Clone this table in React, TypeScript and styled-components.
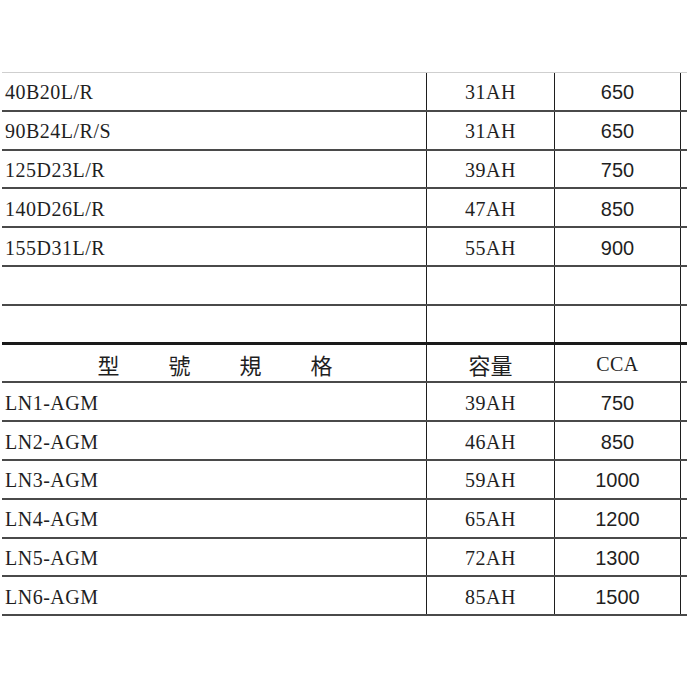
import React from 'react';
import styled, { createGlobalStyle } from 'styled-components';

const GlobalStyle = createGlobalStyle`
  html, body {
    margin: 0;
    padding: 0;
    background: #ffffff;
    overflow: hidden;
  }
`;

const Sheet = styled.div`
  width: 687px;
  height: 687px;
  padding: 72px 0 0 2px;
  box-sizing: border-box;
  overflow: hidden;
`;

const Table = styled.div`
  width: 720px;
  border-top: 1px solid #cfcfcf;
`;

const Row = styled.div<{ $thick?: boolean }>`
  display: grid;
  grid-template-columns: 425px 128px 126px 1fr;
  height: 38.8px;
  box-sizing: border-box;
  border-bottom: ${(p) => (p.$thick ? '3px solid #1a1a1a' : '2px solid #4a4a4a')};
`;

const Cell = styled.div<{ $align?: 'left' | 'center'; $sans?: boolean }>`
  display: flex;
  align-items: center;
  justify-content: ${(p) => (p.$align === 'left' ? 'flex-start' : 'center')};
  padding-left: ${(p) => (p.$align === 'left' ? '3px' : '0')};
  padding-top: 3px;
  box-sizing: border-box;
  border-right: 1.5px solid #1e1e1e;
  color: #1f1f1f;
  font-family: ${(p) => (p.$sans ? '"Liberation Sans", Arial, sans-serif' : '"Liberation Serif", "Noto Sans CJK TC", serif')};
  font-size: 20px;
  letter-spacing: ${(p) => (p.$sans ? '0' : '0.5px')};
  white-space: nowrap;
  &:last-child {
    border-right: none;
  }
`;

const HeadCell = styled(Cell)`
  font-family: "Noto Sans CJK TC", "Noto Sans CJK SC", sans-serif;
  font-size: 22px;
  letter-spacing: 0;
`;

const SpacedTitle = styled.div`
  display: flex;
  gap: 49px;
  padding-left: 2px;
`;

const top = [
  ['40B20L/R', '31AH', '650'],
  ['90B24L/R/S', '31AH', '650'],
  ['125D23L/R', '39AH', '750'],
  ['140D26L/R', '47AH', '850'],
  ['155D31L/R', '55AH', '900'],
];

const agm = [
  ['LN1-AGM', '39AH', '750'],
  ['LN2-AGM', '46AH', '850'],
  ['LN3-AGM', '59AH', '1000'],
  ['LN4-AGM', '65AH', '1200'],
  ['LN5-AGM', '72AH', '1300'],
  ['LN6-AGM', '85AH', '1500'],
];

const DataRow = ({ item }: { item: string[] }) => (
  <Row>
    <Cell $align="left">{item[0]}</Cell>
    <Cell>{item[1]}</Cell>
    <Cell $sans>{item[2]}</Cell>
    <Cell />
  </Row>
);

const EmptyRow = ({ thick }: { thick?: boolean }) => (
  <Row $thick={thick}>
    <Cell />
    <Cell />
    <Cell />
    <Cell />
  </Row>
);

export default function App() {
  return (
    <>
      <GlobalStyle />
      <Sheet>
        <Table>
          {top.map((item) => (
            <DataRow key={item[0]} item={item} />
          ))}
          <EmptyRow />
          <EmptyRow thick />
          <Row>
            <HeadCell>
              <SpacedTitle>
                <span>型</span>
                <span>號</span>
                <span>規</span>
                <span>格</span>
              </SpacedTitle>
            </HeadCell>
            <HeadCell>容量</HeadCell>
            <Cell>CCA</Cell>
            <Cell />
          </Row>
          {agm.map((item) => (
            <DataRow key={item[0]} item={item} />
          ))}
        </Table>
      </Sheet>
    </>
  );
}
